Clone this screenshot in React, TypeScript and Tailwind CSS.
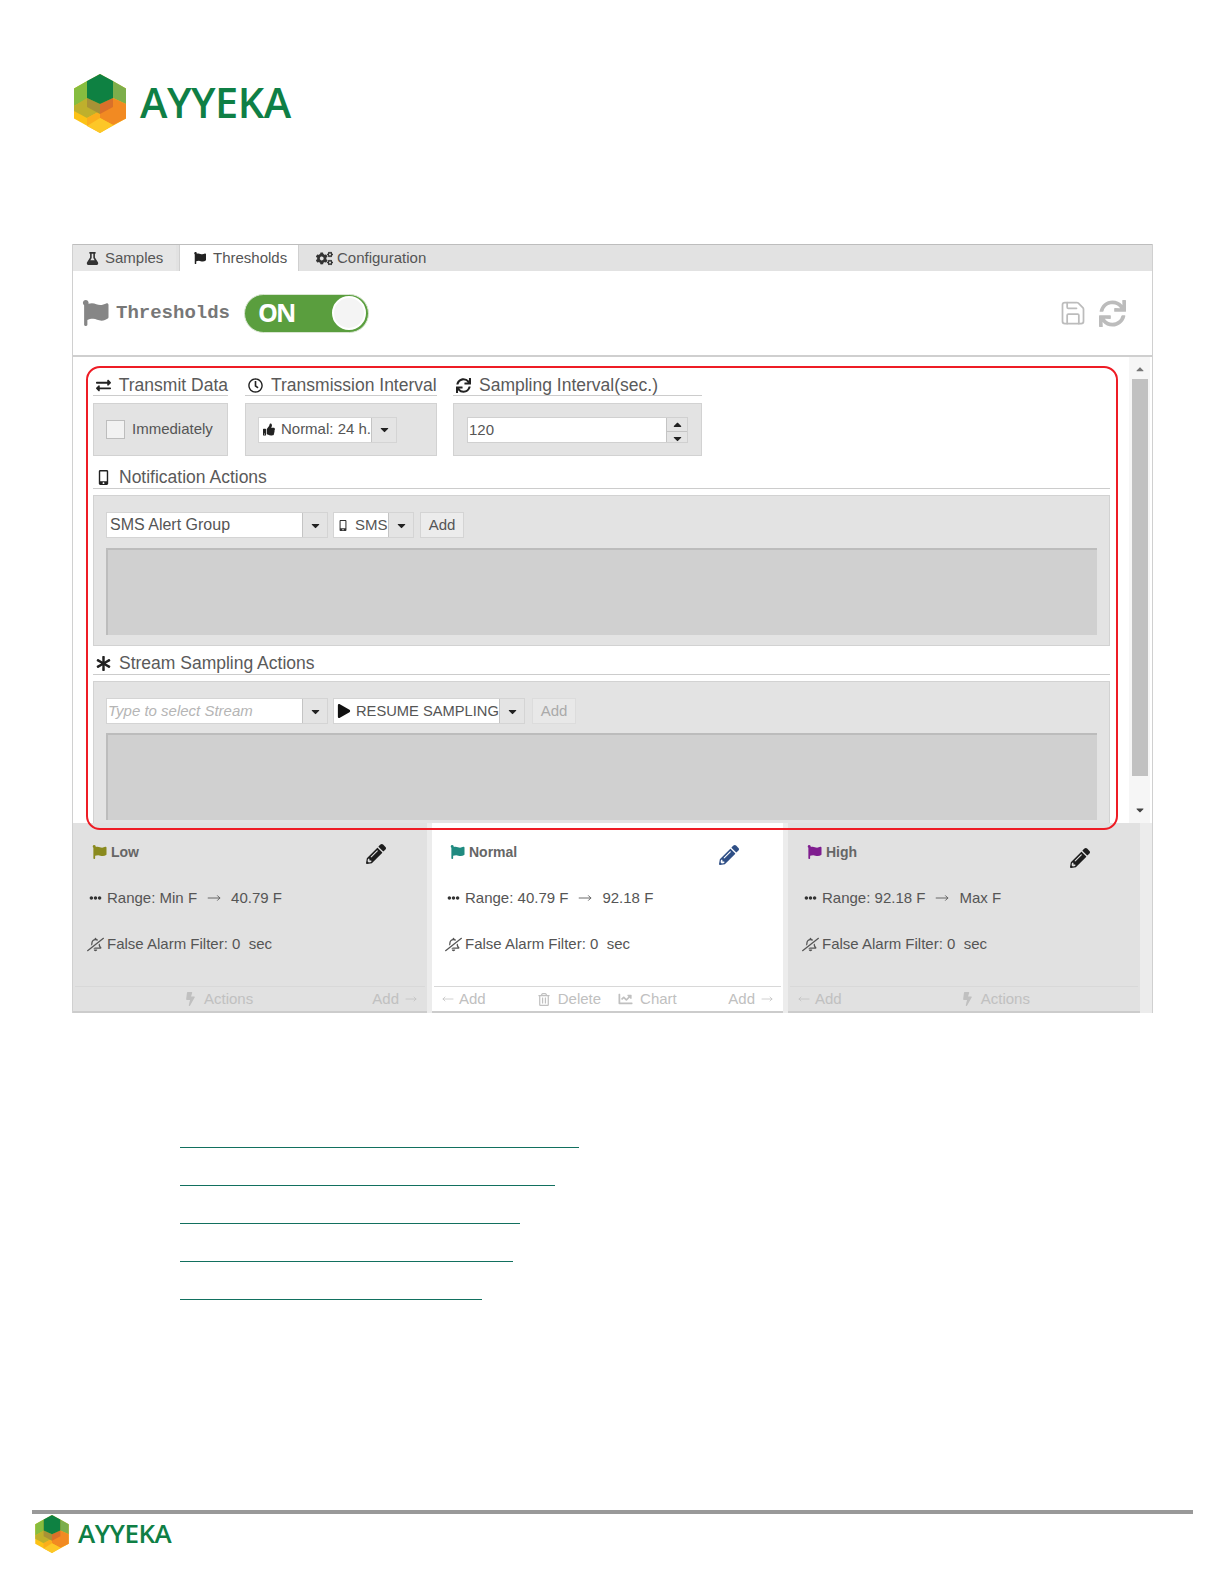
import React from 'react';
import {
  FaAsterisk, FaBolt, FaCaretDown, FaCaretUp, FaChartLine, FaCogs, FaEllipsisH, FaExchangeAlt, FaFlag, FaFlask,
  FaMobileAlt, FaPencilAlt, FaPlay, FaRegBellSlash, FaRegClock, FaRegTrashAlt, FaSync, FaThumbsUp,
} from 'react-icons/fa';
import { MoveLeft, MoveRight, Save } from 'lucide-react';

const Hex: React.FC<{ className: string }> = ({ className }) => (
  <svg viewBox="0 0 52 59" className={className}>
    <polygon points="26,0 52,14.5 52,44.5 26,59 0,44.5 0,14.5" fill="#fcc216" />
    <polygon points="13,7 0,14.5 0,32 13,25" fill="#86bd3f" />
    <polygon points="39,7 52,14.5 52,30 39,24" fill="#7dae4b" />
    <polygon points="0,32 13,24 26,30 26,37 13,44 0,37" fill="#bfb02c" />
    <polygon points="26,30 39,24 52,30 52,44.5 39,51 26,44" fill="#f28a22" />
    <polygon points="13,44 26,37 26,51 13,52" fill="#fbae1c" />
    <polygon points="26,44 39,51 26,59 13,52" fill="#fdc727" />
    <polygon points="13,24 26,30 26,40 13,33" fill="#a89236" />
    <polygon points="26,30 39,24 39,33 26,40" fill="#d9702a" />
    <polygon points="26,0 39,7 39,24 26,30 13,24 13,7" fill="#0e8142" />
  </svg>
);

const Section: React.FC<{ icon: React.ReactNode; label: string; className: string }> = ({ icon, label, className }) => (
  <div className={`flex items-center border-b border-[#ccc] text-[17.5px] text-[#5a5a5a] whitespace-nowrap ${className}`}>
    <span className="w-[21px] mr-[5px] flex justify-center text-[#222] text-[15px]">{icon}</span>
    {label}
  </div>
);

const Combo: React.FC<{ w: string; children: React.ReactNode }> = ({ w, children }) => (
  <div className={`flex h-[26px] border border-[#d4d4d4] bg-white ${w}`}>
    <div className="flex-1 flex items-center min-w-0 whitespace-nowrap">{children}</div>
    <div className="w-[25px] flex items-center justify-center bg-[#e4e4e4] border-l border-[#c4c4c4] text-[#222] text-[13px]">
      <FaCaretDown />
    </div>
  </div>
);

const Row: React.FC<{ className?: string; children: React.ReactNode }> = ({ className = '', children }) => (
  <div className={`flex items-center text-[15px] text-[#555] whitespace-nowrap ${className}`}>{children}</div>
);

const Card: React.FC<{
  name: string;
  flag: string;
  from: string;
  to: string;
  pencil: string;
  outer: string;
  inset: string;
  footer: React.ReactNode;
}> = ({ name, flag, from, to, pencil, outer, inset, footer }) => (
  <div className={`flex flex-col border-b-2 border-[#ccc] ${outer}`}>
    <div className={`flex-1 ${inset}`}>
      <div className="relative flex items-center h-[28px] mt-[15px] text-[14px] font-bold text-[#666] pl-[3px]">
        <FaFlag className={`w-[17px] h-[14px] mr-[3px] ${flag}`} />
        {name}
        <FaPencilAlt className={`ml-auto w-[20px] h-[20px] ${pencil}`} />
      </div>
      <Row className="mt-[18px] h-[28px]">
        <FaEllipsisH className="w-[15px] h-[12px] mr-[4px] text-[#333]" />
        Range: {from}
        <MoveRight className="w-[20px] h-[14px] mx-[7px] text-[#555]" strokeWidth={1.5} />
        {to}
      </Row>
      <Row className="mt-[18px] h-[28px]">
        <FaRegBellSlash className="w-[17px] h-[15px] mr-[3px] -ml-px text-[#555] -scale-x-100" />
        False Alarm Filter: 0&nbsp; sec
      </Row>
    </div>
    <div className="h-[25px] mx-[2px] border-t border-[#d8d8d8] flex items-center text-[15px] text-[#c0c0c0] whitespace-nowrap">
      {footer}
    </div>
  </div>
);

const AddLeft = () => (
  <span className="flex items-center ml-[6px]">
    <MoveLeft className="w-[16px] h-[12px] mr-[3px]" strokeWidth={1.5} />
    Add
  </span>
);
const AddRight = () => (
  <span className="flex items-center ml-auto mr-[6px]">
    Add
    <MoveRight className="w-[16px] h-[12px] ml-[4px]" strokeWidth={1.5} />
  </span>
);
const Actions: React.FC<{ className: string }> = ({ className }) => (
  <span className={`flex items-center ${className}`}>
    <FaBolt className="w-[9px] h-[14px] mr-[9px]" />
    Actions
  </span>
);

export default function App() {
  return (
    <div className="relative w-[1224px] h-[1584px] bg-white overflow-hidden flex flex-col font-['Liberation_Sans',sans-serif]">
      <div className="flex items-center h-[60px] mt-[73px] ml-[74px]">
        <Hex className="w-[52px] h-[59px]" />
        <span className="ml-[14px] -mt-[2px] text-[41.5px] font-semibold text-[#0f7f45] font-['Open_Sans',sans-serif] tracking-[-0.5px]">AYYEKA</span>
      </div>

      <div className="relative w-[1081px] h-[769px] mt-[111px] ml-[72px] flex flex-col bg-white border-x border-[#d0d0d0]">
        {/* tabs */}
        <div className="h-[27px] flex bg-[#e2e2e2] border-t border-[#bdbdbd] text-[15px] text-[#555]">
          <div className="w-[103px] flex items-center bg-[#e6e6e6] pl-[13px]">
            <FaFlask className="w-[13px] h-[13px] mr-[6px] text-[#333]" />
            Samples
          </div>
          <div className="w-[120px] ml-[3px] flex items-center bg-white border-x border-[#d0d0d0] pl-[13px]">
            <FaFlag className="w-[14px] h-[12px] mr-[6px] text-[#222]" />
            Thresholds
          </div>
          <div className="flex items-center pl-[17px]">
            <FaCogs className="w-[17px] h-[15px] mr-[4px] text-[#333]" />
            Configuration
          </div>
        </div>

        {/* title row */}
        <div className="h-[86px] flex items-center border-b-2 border-[#cfcfcf] pl-[8px] pr-[26px] shrink-0">
          <FaFlag className="w-[29px] h-[26px] text-[#868686]" />
          <span className="ml-[6px] text-[19px] font-bold text-[#777] font-['Liberation_Mono',monospace]">Thresholds</span>
          <div className="ml-[14px] w-[125px] h-[39px] rounded-full bg-[#5a9e3e] flex items-center justify-between pl-[13px] pr-[2px] border border-[#d9e6d2]">
            <span className="text-[25px] font-bold text-white font-['Open_Sans',sans-serif] tracking-[-2px]">ON</span>
            <div className="w-[34px] h-[34px] rounded-full bg-[#f4f4f4] border-2 border-white" />
          </div>
          <Save className="ml-auto w-[28px] h-[28px] text-[#bcbcbc]" strokeWidth={1.5} />
          <FaSync className="ml-[12px] w-[27px] h-[27px] text-[#bcbcbc]" />
        </div>

        {/* scroll area */}
        <div className="h-[466px] flex shrink-0 overflow-hidden">
          <div className="flex-1 pl-[20px] pt-[12px] pr-[19px]">
            <div className="flex">
              <div className="w-[135px]">
                <Section icon={<FaExchangeAlt />} label="Transmit Data" className="h-[27px] pt-[7px]" />
                <div className="mt-[7px] h-[53px] bg-[#e3e3e3] border border-[#d2d2d2] flex items-center pl-[12px] text-[15px] text-[#555]">
                  <div className="w-[19px] h-[19px] bg-[#f2f2f2] border border-[#bdbdbd] mr-[7px]" />
                  Immediately
                </div>
              </div>
              <div className="w-[192px] ml-[17px]">
                <Section icon={<FaRegClock />} label="Transmission Interval" className="h-[27px] pt-[7px]" />
                <div className="mt-[7px] h-[53px] bg-[#e3e3e3] border border-[#d2d2d2] flex items-center pl-[12px]">
                  <Combo w="w-[139px]">
                    <FaThumbsUp className="w-[15px] h-[13px] ml-[4px] mr-[6px] text-[#222]" />
                    <span className="text-[15px] text-[#555]">Normal: 24 h.</span>
                  </Combo>
                </div>
              </div>
              <div className="w-[249px] ml-[16px]">
                <Section icon={<FaSync />} label="Sampling Interval(sec.)" className="h-[27px] pt-[7px]" />
                <div className="mt-[7px] h-[53px] bg-[#e3e3e3] border border-[#d2d2d2] flex items-center pl-[13px]">
                  <div className="flex w-[221px] h-[26px] bg-white border border-[#d0d0d0]">
                    <span className="flex-1 text-[15px] leading-[24px] pl-[1px] text-[#555]">120</span>
                    <div className="w-[21px] flex flex-col bg-[#e4e4e4] border-l border-[#c4c4c4] text-[#222] text-[13px]">
                      <div className="flex-1 flex items-center justify-center border-b border-[#c4c4c4]"><FaCaretUp /></div>
                      <div className="flex-1 flex items-center justify-center"><FaCaretDown /></div>
                    </div>
                  </div>
                </div>
              </div>
            </div>

            <Section icon={<FaMobileAlt />} label="Notification Actions" className="h-[24px] mt-[9px] pt-[2px]" />
            <div className="mt-[6px] h-[151px] bg-[#e3e3e3] border border-[#d2d2d2] pl-[12px] pr-[12px] pt-[16px]">
              <div className="flex gap-[5px]">
                <Combo w="w-[222px]">
                  <span className="text-[16px] text-[#555] pl-[3px]">SMS Alert Group</span>
                </Combo>
                <Combo w="w-[81px]">
                  <FaMobileAlt className="w-[12px] h-[11px] ml-[3px] mr-[6px] text-[#333]" />
                  <span className="text-[15px] text-[#555]">SMS</span>
                </Combo>
                <button className="ml-[1px] w-[44px] h-[26px] bg-[#ececec] border border-[#d4d4d4] text-[15px] text-[#555]">Add</button>
              </div>
              <div className="mt-[10px] h-[87px] bg-[#d0d0d0] border-t-2 border-l-2 border-[#bcbcbc]" />
            </div>

            <Section icon={<FaAsterisk />} label="Stream Sampling Actions" className="h-[24px] mt-[5px] pt-[2px]" />
            <div className="mt-[6px] h-[160px] bg-[#e3e3e3] border border-[#d2d2d2] pl-[12px] pr-[12px] pt-[16px]">
              <div className="flex gap-[5px]">
                <Combo w="w-[222px]">
                  <span className="text-[15px] italic text-[#b5b5b5] pl-[1px]">Type to select Stream</span>
                </Combo>
                <Combo w="w-[192px]">
                  <FaPlay className="w-[14px] h-[14px] ml-[3px] mr-[5px] text-[#111]" />
                  <span className="text-[14.7px] text-[#555]">RESUME SAMPLING</span>
                </Combo>
                <button className="ml-[2px] w-[44px] h-[26px] bg-[#e8e8e8] border border-[#dcdcdc] text-[15px] text-[#aaa]">Add</button>
              </div>
              <div className="mt-[9px] h-[87px] bg-[#d0d0d0] border-t-2 border-l-2 border-[#bcbcbc]" />
            </div>
          </div>

          {/* scrollbar */}
          <div className="w-[21px] mr-[2px] flex flex-col items-center bg-[#f6f6f6] text-[#777] text-[12px]">
            <div className="h-[22px] flex items-center justify-center pt-[2px]"><FaCaretUp /></div>
            <div className="w-[16px] h-[397px] bg-[#c1c1c1]" />
            <div className="flex-1 flex items-end justify-center pb-[7px]"><FaCaretDown className="text-[#444]" /></div>
          </div>
        </div>

        {/* threshold cards */}
        <div className="flex-1 flex gap-[5px] bg-[#ececec]">
          <Card
            name="Low"
            flag="text-[#8a8a1e]"
            from="Min F"
            to="40.79 F"
            pencil="text-[#1d1d1d] mr-[41px] translate-y-[2px]"
            outer="w-[354px] bg-[#e1e1e1]"
            inset="pl-[15px]"
            footer={
              <>
                <Actions className="ml-[111px]" />
                <AddRight />
              </>
            }
          />
          <Card
            name="Normal"
            flag="text-[#1f8a80]"
            from="40.79 F"
            to="92.18 F"
            pencil="text-[#2f4f86] mr-[44px] translate-y-[3px]"
            outer="w-[351px] bg-white"
            inset="pl-[14px]"
            footer={
              <>
                <AddLeft />
                <span className="flex items-center ml-[52px]">
                  <FaRegTrashAlt className="w-[12px] h-[13px] mr-[8px]" />
                  Delete
                </span>
                <span className="flex items-center ml-[16px]">
                  <FaChartLine className="w-[17px] h-[14px] mr-[6px]" />
                  Chart
                </span>
                <AddRight />
              </>
            }
          />
          <Card
            name="High"
            flag="text-[#7f1d8f]"
            from="92.18 F"
            to="Max F"
            pencil="text-[#1d1d1d] mr-[50px] translate-y-[6px]"
            outer="w-[352px] bg-[#e1e1e1]"
            inset="pl-[15px]"
            footer={
              <>
                <AddLeft />
                <Actions className="ml-[121px]" />
              </>
            }
          />
        </div>

        {/* red callout around the settings area */}
        <div className="absolute left-[13px] top-[122px] w-[1032px] h-[464px] rounded-[14px] border-2 border-[#ee1c25] pointer-events-none" />
      </div>

      {/* empty link rows */}
      <div className="mt-[134px] ml-[180px] flex flex-col gap-[37px]">
        <div className="w-[399px] h-px bg-[#12705f]" />
        <div className="w-[375px] h-px bg-[#12705f]" />
        <div className="w-[340px] h-px bg-[#12705f]" />
        <div className="w-[333px] h-px bg-[#12705f]" />
        <div className="w-[302px] h-px bg-[#12705f]" />
      </div>

      {/* footer */}
      <div className="mt-auto mb-[31px] ml-[32px] w-[1161px]">
        <div className="h-[4px] bg-[#999]" />
        <div className="flex items-center ml-[3px]">
          <Hex className="w-[34px] h-[38px]" />
          <span className="ml-[9px] text-[26px] font-semibold text-[#0f7f45] font-['Open_Sans',sans-serif] tracking-[-0.5px]">AYYEKA</span>
        </div>
      </div>
    </div>
  );
}
